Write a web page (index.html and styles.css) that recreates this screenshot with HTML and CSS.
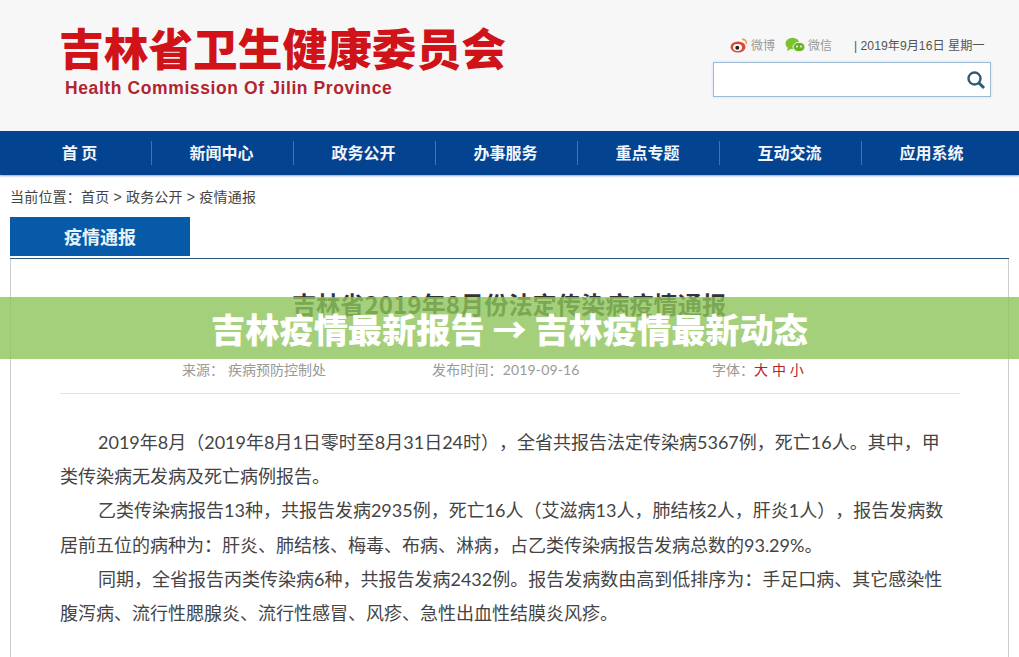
FILE: index.html
```html
<!DOCTYPE html>
<html lang="zh-CN">
<head>
    <meta charset="UTF-8">
    <title>吉林疫情最新报告</title>
    <link rel="stylesheet" href="styles.css">
</head>
<body>

<header class="top">
  <div class="logo">
    <h1 class="logo-cn">吉林省卫生健康委员会</h1>
    <p class="logo-en">Health Commission Of Jilin Province</p>
  </div>
  <div class="top-right">
    <div class="top-links">
      <svg class="ico" width="19" height="16" viewBox="0 0 19 16">
        <ellipse cx="8" cy="10" rx="7.5" ry="5.5" fill="#d9483b"/>
        <ellipse cx="7.5" cy="10.5" rx="4.5" ry="3.4" fill="#fff"/>
        <circle cx="7.3" cy="10.7" r="2" fill="#222"/>
        <path d="M12 2.5c2.5-.6 5 1.400 4.300 4.500" fill="none" stroke="#e8a33d" stroke-width="1.600"/>
      </svg>
      <span class="link-txt">微博</span>
      <svg class="ico wx" width="21" height="16" viewBox="0 0 21 16">
        <ellipse cx="7.500" cy="6.500" rx="7" ry="5.800" fill="#7cc22c"/>
        <path d="M3 10l-1 4 4-2z" fill="#7cc22c"/>
        <ellipse cx="14" cy="10" rx="6" ry="4.800" fill="#6ab51f" stroke="#f7f7f8"/>
        <circle cx="12" cy="9.500" r=".9" fill="#fff"/>
        <circle cx="16" cy="9.500" r=".9" fill="#fff"/>
      </svg>
      <span class="link-txt">微信</span>
      <span class="date">| 2019年9月16日 星期一</span>
    </div>
    <div class="search">
      <svg width="20" height="20" viewBox="0 0 20 20">
        <circle cx="8.500" cy="8.500" r="6" fill="none" stroke="#2d5c78" stroke-width="2.400"/>
        <path d="M13 13l5 5" stroke="#2d5c78" stroke-width="3"/>
      </svg>
    </div>
  </div>
</header>

<nav class="nav">
  <a class="nav-item">首 页</a>
  <a class="nav-item">新闻中心</a>
  <a class="nav-item">政务公开</a>
  <a class="nav-item">办事服务</a>
  <a class="nav-item">重点专题</a>
  <a class="nav-item">互动交流</a>
  <a class="nav-item">应用系统</a>
</nav>

<div class="crumbs">当前位置：首页 &gt; 政务公开 &gt; 疫情通报</div>

<div class="tab-row">
  <div class="tab">疫情通报</div>
</div>

<section class="article">
  <h2 class="art-title">吉林省2019年8月份法定传染病疫情通报</h2>
  <div class="meta">
    <span class="meta-a">来源： 疾病预防控制处</span>
    <span class="meta-b">发布时间：2019-09-16</span>
    <span class="meta-c">字体：<em>大 中 小</em></span>
  </div>
  <div class="art-body">
    <p class="indent">2019年8月（2019年8月1日零时至8月31日24时），全省共报告法定传染病5367例，死亡16人。其中，甲类传染病无发病及死亡病例报告。</p>
    <p class="indent">乙类传染病报告13种，共报告发病2935例，死亡16人（艾滋病13人，肺结核2人，肝炎1人），报告发病数居前五位的病种为：肝炎、肺结核、梅毒、布病、淋病，占乙类传染病报告发病总数的93.29%。</p>
    <p class="indent">同期，全省报告丙类传染病6种，共报告发病2432例。报告发病数由高到低排序为：手足口病、其它感染性腹泻病、流行性腮腺炎、流行性感冒、风疹、急性出血性结膜炎风疹。</p>
  </div>
</section>

<div class="banner">吉林疫情最新报告 → 吉林疫情最新动态</div>

</body>
</html>
```

FILE: styles.css
```css
/*CSS RESETS*/

html, body {
    margin: 0;
    padding: 0;
    height: 657px;
    overflow: hidden;
}

h1, h2, p {
    margin: 0;
}

body {
    position: relative;
    background-color: #fff;
    font-family: "Liberation Sans", "Noto Sans CJK SC", sans-serif;
    text-spacing-trim: space-all;
}


/*CSS START*/

.top {
    display: flex;
    justify-content: space-between;
    height: 131px;
    background-color: #f7f7f8;
}

.logo {
    padding: 22px 0 0 59px;
}

.logo-cn {
    font-family: "Noto Sans CJK SC", sans-serif;
    font-size: 44.7px;
    font-weight: 900;
    line-height: 50px;
    color: #cf1318;
}

.logo-en {
    margin: 6px 0 0 6px;
    font-size: 17.5px;
    font-weight: 700;
    line-height: 20px;
    letter-spacing: 0.6px;
    color: #b22430;
}

.top-right {
    width: 306px;
    padding-top: 35px;
}

.top-links {
    display: flex;
    align-items: center;
    height: 19px;
    padding-left: 17px;
    font-size: 12px;
    color: #555;
}

.link-txt {
    margin-left: 2px;
    color: #999;
}

.wx {
    margin-left: 10px;
}

.date {
    margin-left: 22px;
    font-size: 12.2px;
}

.search {
    display: flex;
    align-items: center;
    justify-content: flex-end;
    box-sizing: border-box;
    width: 278px;
    height: 35px;
    margin-top: 8px;
    padding-right: 4px;
    border: 1px solid #9dbcd4;
    background-color: #fff;
    box-shadow: 0 0 3px #cfe0ee;
}

.nav {
    display: flex;
    height: 44px;
    padding-left: 10px;
    background-color: #03438f;
    box-shadow: 0 1px 2px #8aa4c4;
}

.nav-item {
    display: flex;
    align-items: center;
    justify-content: center;
    box-sizing: border-box;
    width: 142px;
    padding: 0 3px 3px 0;
    font-family: "Noto Sans CJK SC", sans-serif;
    font-size: 16px;
    font-weight: 700;
    color: #f2f6fa;
    background: linear-gradient(#3f75b0, #3f75b0) right center / 1px 24px no-repeat;
}

.nav-item:last-child {
    background: none;
}

.crumbs {
    padding: 14px 0 0 10px;
    font-size: 14px;
    line-height: 17px;
    letter-spacing: 0.2px;
    color: #444;
}

.tab-row {
    margin: 11px 10px 0 10px;
    height: 41px;
    border-bottom: 1px solid #2f5a7c;
}

.tab {
    width: 180px;
    height: 39px;
    line-height: 39px;
    text-align: center;
    font-family: "Noto Sans CJK SC", sans-serif;
    font-size: 18px;
    font-weight: 700;
    color: #e8f4fb;
    background-color: #065aa8;
}

.article {
    box-sizing: border-box;
    height: 398px;
    margin: 0 10px;
    border-left: 1px solid #ccc;
    border-right: 1px solid #ccc;
    padding: 30px 0 0 49px;
}

.art-title {
    width: 898px;
    text-align: center;
    font-family: "Noto Sans CJK SC", sans-serif;
    font-size: 24.2px;
    font-weight: 700;
    line-height: 30px;
    color: #333;
}

.meta {
    display: flex;
    height: 33px;
    margin-top: 41px;
    padding-left: 122px;
    width: 778px;
    font-size: 14px;
    line-height: 20px;
    color: #999;
    border-bottom: 1px solid #e2e2e2;
}

.meta-a {
    width: 250px;
}

.meta-b {
    width: 280px;
    font-family: "Lato", "Noto Sans CJK SC", sans-serif;
    letter-spacing: 0.15px;
}

.meta-c em {
    font-style: normal;
    color: #b3232a;
}

.art-body {
    width: 884px;
    margin-top: 31px;
    font-family: "Lato", "Noto Sans CJK SC", sans-serif;
    font-size: 18px;
    line-height: 34.2px;
    color: #444;
}

.indent {
    text-indent: 38px;
}

.banner {
    position: absolute;
    left: 0;
    top: 297px;
    width: 100%;
    height: 62px;
    line-height: 62px;
    text-align: center;
    font-family: "Noto Sans CJK SC", sans-serif;
    font-size: 34.2px;
    font-weight: 900;
    color: #fff;
    background-color: rgba(142, 196, 90, 0.8);
}
```
